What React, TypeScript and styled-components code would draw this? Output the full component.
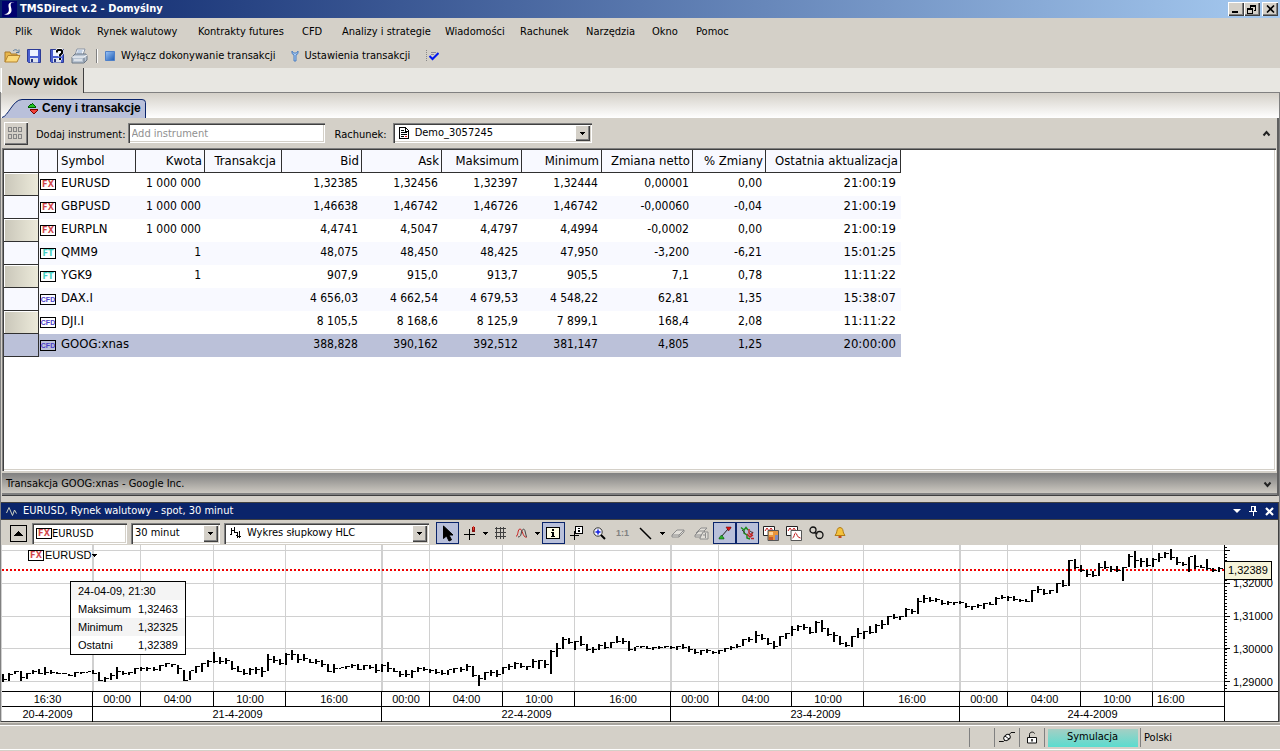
import React from "react";
import styled, { createGlobalStyle } from "styled-components";

const UI = '"DejaVu Sans Condensed", "DejaVu Sans", sans-serif';
const ARIAL = '"Liberation Sans", Arial, sans-serif';
const FACE = "#d4d0c8";
const NAVY = "#0a246a";
const PALE = "#b9c0da";

const GlobalStyle = createGlobalStyle`
  * { box-sizing: border-box; }
  body { margin: 0; background: ${FACE}; color: #000; font: 11px/14px ${UI}; }
  button, input, select { font: inherit; color: inherit; margin: 0; padding: 0; border: 0; background: none; border-radius: 0; }
  svg { display: block; flex: none; }
`;

/* ---------- window ---------- */

const Window = styled.div`
  display: flex;
  flex-direction: column;
  min-height: 100vh;
`;

const TitleBar = styled.header`
  display: flex;
  align-items: center;
  height: 18px;
  padding-right: 2px;
  background: linear-gradient(to right, ${NAVY}, #a6caf0);
`;

const WindowTitle = styled.h1`
  flex: 1;
  margin: 0 0 0 2px;
  color: #fff;
  font: bold 11px/18px ${UI};
`;

const CaptionButton = styled.button<{ $apart?: boolean }>`
  display: flex;
  align-items: center;
  justify-content: center;
  width: 16px;
  height: 14px;
  margin-left: ${(p) => (p.$apart ? 2 : 0)}px;
  background: ${FACE};
  box-shadow: inset 1px 1px #fff, inset -1px -1px #404040, inset -2px -2px #808080;
`;

const MenuBar = styled.nav`
  display: grid;
  grid-template-columns: 35px 47px 101px 104px 40px 103px 75px 66px 66px 44px auto;
  justify-content: start;
  align-items: center;
  height: 25px;
  padding: 2px 0 0 15px;
`;

const MenuItem = styled.button`
  text-align: left;
  white-space: nowrap;
`;

const ToolBar = styled.div`
  display: flex;
  align-items: center;
  height: 25px;
  padding-left: 3px;
`;

const IconButton = styled.button`
  display: flex;
  align-items: center;
  justify-content: center;
  width: 23px;
  height: 22px;
  &:first-child { width: 19px; }
`;

const Rule = styled.span`
  width: 2px;
  height: 14px;
  margin: 0 7px 0 5px;
  border-left: 1px solid #808080;
  border-right: 1px solid #fff;
`;

const LabelButton = styled.button`
  display: flex;
  align-items: center;
  gap: 6px;
  height: 22px;
  margin-right: 15px;
  white-space: nowrap;
`;

/* ---------- views ---------- */

const ViewTabs = styled.div`
  display: flex;
  height: 25px;
  padding-left: 1px;
  background: #e8e7e2;
  border-bottom: 1px solid #808080;
`;

const ViewTab = styled.button`
  height: 25px;
  padding: 0 6px;
  background: ${FACE};
  border-right: 1px solid #404040;
  border-left: 1px solid #fff;
  font: bold 12px/24px ${ARIAL};
`;

const Dock = styled.main`
  flex: 1;
  display: flex;
  flex-direction: column;
  border-right: 1px solid #808080;
  border-left: 1px solid #808080;
`;

const PanelTabs = styled.div`
  display: flex;
  align-items: flex-end;
  height: 25px;
  padding-left: 1px;
  background: linear-gradient(${FACE}, #fff);
`;

const PanelTab = styled.button`
  position: relative;
  isolation: isolate;
  display: flex;
  align-items: center;
  gap: 4px;
  width: 144px;
  height: 19px;
  padding-left: 26px;
  white-space: nowrap;
  font: bold 12px/19px ${ARIAL};
`;

const TabShape = styled.svg`
  position: absolute;
  inset: 0;
  z-index: -1;
`;

const PricesPanel = styled.section`
  flex: 1;
  display: flex;
  flex-direction: column;
  margin-left: 1px;
  border-right: 2px solid #606060;
`;

const FilterBar = styled.form`
  display: flex;
  align-items: center;
  height: 30px;
  padding: 0 3px 0 2px;
`;

const RaisedButton = styled.button`
  display: flex;
  align-items: center;
  justify-content: center;
  width: 24px;
  height: 23px;
  background: ${FACE};
  box-shadow: inset 1px 1px #fff, inset -1px -1px #404040, inset -2px -2px #808080;
`;

const FieldLabel = styled.label<{ $roomy?: boolean }>`
  margin: 3px ${(p) => (p.$roomy ? "6px 0 10px" : "2px 0 8px")};
  white-space: nowrap;
`;

const Sunken = styled.div<{ $w: number; $h: number; $icon?: boolean }>`
  display: flex;
  align-items: center;
  gap: ${(p) => (p.$icon ? 4 : 0)}px;
  width: ${(p) => p.$w}px;
  height: ${(p) => p.$h}px;
  padding: 2px 2px 2px ${(p) => (p.$icon ? 6 : 2)}px;
  background: #fff;
  box-shadow: inset 1px 1px #808080, inset 2px 2px #404040, inset -1px -1px #fff, inset -2px -2px ${FACE};
`;

const TextInput = styled.input<{ $flush?: boolean }>`
  flex: 1;
  min-width: 0;
  height: 100%;
  padding-left: ${(p) => (p.$flush ? 0 : 2)}px;
  outline: 0;
  &::placeholder { color: #909090; opacity: 1; }
`;

const Select = styled.select`
  flex: 1;
  min-width: 0;
  height: 100%;
  padding-left: 2px;
  appearance: none;
  outline: 0;
`;

const DropArrow = styled.span`
  display: flex;
  align-items: center;
  justify-content: center;
  width: 15px;
  height: 100%;
  background: ${FACE};
  box-shadow: inset 1px 1px #fff, inset -1px -1px #404040, inset -2px -2px #808080;
`;

const Spring = styled.span`
  flex: 1;
`;

const PlainIcon = styled.button`
  display: flex;
  align-items: center;
  justify-content: center;
  width: 16px;
  height: 14px;
`;

const TableFrame = styled.div`
  flex: 1;
  margin-right: 1px;
  padding: 2px 0 0 2px;
  background: #fff;
  box-shadow: inset 1px 1px #808080, inset 2px 2px #404040, inset -1px -1px #fff, inset -2px -2px ${FACE};
`;

const Grid = styled.table`
  width: 897px;
  table-layout: fixed;
  border-collapse: separate;
  border-spacing: 0;
`;

const HeadCell = styled.th<{ $left?: boolean }>`
  height: 23px;
  padding: 0 2px 0 3px;
  background: #f8f9ff;
  border-right: 1px solid #303030;
  border-bottom: 1px solid #303030;
  font-size: 13px;
  font-weight: normal;
  text-align: ${(p) => (p.$left ? "left" : "right")};
  white-space: nowrap;
`;

const DealHead = styled(HeadCell)`
  padding-right: 5px;
`;

const Row = styled.tr<{ $selected: boolean; $even: boolean }>`
  background: ${(p) => (p.$selected ? "#bbc1d9" : p.$even ? "#f8f9ff" : "#fff")};
`;

const RowHead = styled.th<{ $shaded: boolean }>`
  height: 23px;
  padding: 0;
  border-right: 1px solid #303030;
  border-bottom: 1px solid #303030;
  ${(p) => p.$shaded && "background: linear-gradient(to right, #c9c6b9, #eceada); box-shadow: inset 1px 1px #fff;"}
`;

const Cell = styled.td`
  height: 23px;
  padding: 0 4px 3px 0;
  font-size: 12px;
  text-align: right;
  white-space: nowrap;
`;

const UpdatedCell = styled(Cell)`
  padding-right: 5px;
  font-size: 13px;
`;

const TagCell = styled.td`
  padding: 0 0 0 1px;
`;

const SymbolCell = styled.td`
  padding: 0 0 3px 3px;
  font-size: 13px;
`;

const Tag = styled.span<{ $color: string; $small?: boolean }>`
  display: flex;
  flex: none;
  align-items: center;
  justify-content: center;
  width: 16px;
  height: 11px;
  border: 1px solid #000;
  background: ${(p) => (p.$small ? "transparent" : "#fff")};
  color: ${(p) => p.$color};
  font: bold ${(p) => (p.$small ? `7px/9px ${ARIAL}` : `9px/9px ${UI}`)};
`;

const DealBar = styled.div`
  display: flex;
  align-items: center;
  height: 24px;
  margin-top: 1px;
  padding: 0 2px 0 4px;
  background: linear-gradient(#808080, #cdc9c1 20px, #808080 20px);
  border-top: 1px solid #d4d0c8;
  border-bottom: 1px solid #404040;
`;

/* ---------- chart ---------- */

const ChartPanel = styled.section`
  margin-top: 6px;
  border-right: 1px solid #404040;
  border-bottom: 1px solid #404040;
`;

const ChartTitle = styled.header`
  display: flex;
  align-items: center;
  height: 17px;
  padding: 0 1px 0 5px;
  background: ${NAVY};
  border-top: 1px solid #404040;
  color: #fff;
`;

const ChartName = styled.h2`
  flex: 1;
  margin: 0 0 0 6px;
  font: 11px/16px ${UI};
`;

const ChartTools = styled.div`
  display: flex;
  align-items: center;
  height: 26px;
  padding: 1px 0 0 9px;
  border-top: 1px solid #404040;
`;

const ToolGroup = styled.div`
  display: flex;
  margin-left: 3px;
`;

const UpButton = styled.button`
  display: flex;
  align-items: center;
  justify-content: center;
  width: 17px;
  height: 17px;
  border: 1px solid #000;
  margin-right: 5px;
`;

const Field = styled(Sunken)`
  margin-right: 4px;
`;

const Spacer = styled.span`
  width: 2px;
`;

const Tool = styled.button<{ $on?: boolean; $tight?: boolean }>`
  display: flex;
  align-items: center;
  justify-content: center;
  width: ${(p) => (p.$tight ? 21 : 23)}px;
  height: 22px;
  background: ${(p) => (p.$on ? PALE : "transparent")};
  border: ${(p) => (p.$on ? `1px solid ${NAVY}` : "0")};
  color: #808080;
  font: bold 9px/12px ${ARIAL};
`;

const ToolArrow = styled.button`
  display: flex;
  align-items: center;
  justify-content: center;
  width: 10px;
  height: 22px;
`;

const ChartBody = styled.div`
  display: flex;
  background: #fff;
`;

const PlotColumn = styled.div`
  flex: 1;
  border-right: 1px solid #000;
  border-left: 1px solid #d0d0d0;
`;

const Plot = styled.div`
  position: relative;
  height: 146px;
`;

const Series = styled.svg`
  width: 100%;
  height: 146px;
`;

const Legend = styled.button`
  position: absolute;
  left: 26px;
  top: 3px;
  display: flex;
  align-items: center;
  gap: 1px;
  font: 11px/14px ${ARIAL};
`;

const InfoBox = styled.dl`
  position: absolute;
  left: 68px;
  top: 36px;
  width: 116px;
  height: 74px;
  margin: 0;
  border: 1px solid #000;
  background: #fff;
  font: 11px/18px ${ARIAL};
`;

const InfoRow = styled.div<{ $shaded?: boolean }>`
  display: grid;
  grid-template-columns: 60px auto;
  height: 18px;
  padding-left: 7px;
  background: ${(p) => (p.$shaded ? "#f4f4f4" : "#fff")};
  white-space: nowrap;
  & > dt:only-child { grid-column: span 2; }
`;

const InfoValue = styled.dd`
  margin: 0;
`;

const TimeRow = styled.div<{ $spans: number[] }>`
  display: grid;
  grid-template-columns: ${(p) => p.$spans.map((s) => `minmax(0, ${s}fr)`).join(" ")};
  height: 15px;
  border-top: 1px solid #000;
  font: 11px/15px ${ARIAL};
`;

const TimeCell = styled.div<{ $cut?: boolean }>`
  padding-left: ${(p) => (p.$cut ? 4 : 1)}px;
  text-align: ${(p) => (p.$cut ? "left" : "center")};
  &:not(:first-child) { border-left: 1px solid #000; }
`;

const PriceScale = styled.div`
  position: relative;
  width: 53px;
  padding-top: 22px;
`;

const PriceTicks = styled.svg`
  position: absolute;
  left: 0;
  top: 0;
`;

const PriceLabel = styled.div`
  height: 33px;
  padding-left: 8px;
  font: 11px/33px ${ARIAL};
`;

const ScaleFoot = styled.div`
  position: absolute;
  left: 0;
  right: 0;
  top: 146px;
  border-top: 1px solid #000;
`;

const PriceTag = styled.output`
  position: absolute;
  left: -1px;
  top: 16px;
  width: 48px;
  height: 19px;
  border: 1px solid #000;
  background: #f6f4da;
  padding-left: 3px;
  font: 11px/17px ${ARIAL};
`;

/* ---------- status bar ---------- */

const StatusBar = styled.footer`
  display: flex;
  justify-content: flex-end;
  align-items: center;
  height: 25px;
  margin-top: 3px;
  margin-bottom: 1px;
  border-top: 1px solid #fff;
  border-bottom: 1px solid #fff;
  box-shadow: 0 -2px #a8a59f;
`;

const StatusCell = styled.div<{ $w: number }>`
  display: flex;
  align-items: center;
  justify-content: center;
  width: ${(p) => p.$w}px;
  height: 19px;
  border-left: 1px solid #808080;
`;

const ModeBadge = styled.span`
  width: 90px;
  height: 18px;
  background: linear-gradient(#a4cfc4, #5bdccf);
  line-height: 16px;
  text-align: center;
`;

const LanguageCell = styled(StatusCell)`
  justify-content: flex-start;
  padding-left: 3px;
`;

/* ---------- icons ---------- */

const Down = () => (
  <svg width="5" height="3" shapeRendering="crispEdges"><path d="M0 0h5v1H0zM1 1h3v1H1zM2 2h1v1H2z" /></svg>
);
const Chevron = ({ up }: { up?: boolean }) => (
  <svg width="9" height="7"><path d={up ? "M1.5 5.5 4.5 2l3 3.5" : "M1.5 1.5 4.5 5l3-3.5"} fill="none" stroke="#222" strokeWidth="2" /></svg>
);
const Logo = () => (
  <svg width="18" height="18">
    <path d="M2 1h15v16H2z" fill="#00006e" />
    <path d="M14.500 2.500c-4.500-1-6.500 1-6 4 .6 3 .8 5-1 6.500-1 1-2.600 1.200-4 .7 3 2.200 7.500 1 8-2.700.3-2.600-1.300-5-.8-7 .5-1.300 2-1.700 3.800-1.500z" fill="#fff" />
  </svg>
);
const OpenIcon = () => (
  <svg width="17" height="16">
    <path d="M1 14V4h5l1 2h6v3" fill="#e8b64a" stroke="#a8782a" />
    <path d="M1 14 4 7.500h12L13 14z" fill="#fbd878" stroke="#b58430" />
    <path d="M9 3c2-2 4-1.500 5 .5m1-2v3h-3" fill="none" stroke="#56789c" />
  </svg>
);
const SaveIcon = ({ ask }: { ask?: boolean }) => (
  <svg width="16" height="16">
    <path d="M1.500 1.500h13v13h-12l-1-1z" fill="#4a5fd0" stroke="#2b3a96" />
    <path d="M4 2h8v6H4z" fill="#eef3ff" />
    <path d="M4 10h8v4.500H4z" fill="#dfe4ee" />
    <path d="M5 11h2v3H5z" fill="#26337f" />
    {ask && <path d="M8 4.500V3l1-1h3l1 1v2l-2 2v1.500M11 10v2" fill="none" stroke="#fff" strokeWidth="3.500" />}
    {ask && <path d="M8 4.500V3l1-1h3l1 1v2l-2 2v1.500M11 10v2" fill="none" stroke="#000" strokeWidth="2" />}
  </svg>
);
const PrintIcon = () => (
  <svg width="17" height="16">
    <path d="M6 1h8l-2 6H4z" fill="#fafcff" stroke="#8a94a4" />
    <path d="M6.500 3h5M6 5h5" stroke="#86a3c8" />
    <path d="M1 9l3-3h11l1 2v4l-3 3H1z" fill="#b8c4d2" stroke="#6d7886" />
    <path d="M1 9h12l3-2M3 12h8" fill="none" stroke="#fff" />
    <path d="M13 10v4" stroke="#6d7886" />
  </svg>
);
const StopIcon = () => (
  <svg width="10" height="10">
    <defs><linearGradient id="stop" x2="1" y2="1"><stop stopColor="#9cc5f8" /><stop offset="1" stopColor="#1c5bb4" /></linearGradient></defs>
    <path d="M.5.5h9v9h-9z" fill="url(#stop)" stroke="#4f80c8" />
  </svg>
);
const WrenchIcon = () => (
  <svg width="8" height="12">
    <path d="M1 1v2.500L3 5v6h2V5l2-1.500V1L5.500 3h-3z" fill="#a9cdf6" stroke="#4c7fc0" />
  </svg>
);
const CheckIcon = () => (
  <svg width="14" height="13">
    <path d="M1.500 1v11" stroke="#888" strokeDasharray="1 1" />
    <path d="M6 3.500h5M6 5.500h3" stroke="#88889c" />
    <path d="M4.500 7 7.500 10l6-6" fill="none" stroke="#0018f0" strokeWidth="2" />
  </svg>
);
const UpDownIcon = () => (
  <svg width="10" height="12" shapeRendering="crispEdges">
    <path d="M4 0h1v1h1v1h1v1h1v2H0V3h1V2h1V1h2z" fill="#005800" />
    <path d="M4 1h1v1h1v1h1v1H1V3h1V2h2z" fill="#22c422" />
    <path d="M2 6h8v2H9v1H8v1H7v1H5v-1H4V9H3V8H2z" fill="#7a0000" />
    <path d="M3 7h6v1H8v1H7v1H5V9H4V8H3z" fill="#f04038" />
  </svg>
);
const GridDotsIcon = () => (
  <svg width="16" height="12" shapeRendering="crispEdges" fill="none" stroke="#858585">
    {[0, 5, 10].map((x) => <path key={x} d={`M${x}.5 .5h3v4h-3zM${x}.5 7.500h3v4h-3z`} />)}
  </svg>
);
const DocIcon = () => (
  <svg width="10" height="12" shapeRendering="crispEdges">
    <path d="M.5.500h6l3 3v8h-9z" fill="#fff" stroke="#000" />
    <path d="M2 3.500h3M2 5.500h6M2 7.500h6M2 9.500h3" stroke="#000" />
    <path d="M6 9.500h2" stroke="#e00" />
    <path d="M6.500 1v3h3" fill="none" stroke="#000" />
  </svg>
);
const PulseIcon = () => (
  <svg width="11" height="11"><path d="M.5 7 3 1.500 6.500 9.500 8.500 4l2 3.500" fill="none" stroke="#cfd3c4" /></svg>
);
const HlcIcon = () => (
  <svg width="11" height="12" shapeRendering="crispEdges"><path d="M1.500 1v7M0 7.500h2M1.500 3.500h3M4.500 0v6M4.500 5.500h2M7.500 5v6M6 8.500h2M9.500 4v7M8 9.500h3" stroke="#000" fill="none" /></svg>
);
const CursorIcon = () => (
  <svg width="12" height="17"><path d="M1.500 1v12.500L4.500 11l2.500 5 2.500-1.200L7 10h4z" stroke="#000" /></svg>
);
const CrossIcon = () => (
  <svg width="14" height="16" shapeRendering="crispEdges">
    <path d="M6.500 4v11M1 9.500h11" stroke="#000" />
    <path d="M9 2h3v5H9z" fill="#8a1010" /><path d="M10 1h1v4h-1z" fill="#f04030" />
  </svg>
);
const HashIcon = () => (
  <svg width="13" height="12" shapeRendering="crispEdges"><path d="M2.500 0v12M6.500 0v12M9.500 0v12M1 1.500h11M1 5.500h11M1 9.500h11" stroke="#404040" /></svg>
);
const WaveIcon = () => (
  <svg width="13" height="12" fill="none">
    <path d="M1 9.500C3.500 8.500 2.500 2 5 2S7.500 10 11.500 10.500" stroke="#c81e1e" />
    <path d="M3 10c2.500 0 3-2 3.500-5S9.500 1 10 4l1.500 6" stroke="#444" />
  </svg>
);
const InfoIcon = () => (
  <svg width="15" height="13" shapeRendering="crispEdges">
    <path d="M.5.500h13v11H.500z" fill="#fffde6" stroke="#000" />
    <path d="M6 2h2v2H6zM5 5h3v4h1v1H5V9h1V6H5z" />
  </svg>
);
const InfoCrossIcon = () => (
  <svg width="14" height="14" shapeRendering="crispEdges">
    <path d="M5.500.5h7v7h-7z" fill="#fff" stroke="#000" />
    <path d="M8 2h2v1H8zM8 4h2v2H8zM0 9h9v1H0zM4 5h1v9H4z" />
  </svg>
);
const ZoomIcon = () => (
  <svg width="13" height="13">
    <circle cx="5" cy="5" r="4.200" fill="#f4f6ff" stroke="#333" />
    <path d="M5 2.500v5M2.500 5h5" stroke="#1420e0" strokeWidth="1.500" />
    <path d="m8 8 4 4" stroke="#000" strokeWidth="2" />
  </svg>
);
const LineIcon = () => (
  <svg width="13" height="13"><path d="m1 1 11 11" stroke="#000" strokeWidth="1.500" /></svg>
);
const EraserIcon = ({ many }: { many?: boolean }) => (
  <svg width="15" height="13" fill="#e2dfd9" stroke="#8c8c8c">
    {many && <path d="M2 6l5-5h6l-5 5z" />}
    <path d={many ? "M1 8l4-4h6L7 8zM1 8v2h6V8" : "M1 8l5-5h7L8 8zM1 8v2h7V8M8 10l5-5V3"} />
    {many && <path d="M6 11l3-6 5 0v7H6zM9 8h3M11.500 6v5" />}
  </svg>
);
const TrendIcon = () => (
  <svg width="14" height="14">
    <path d="m3 11 7-8" stroke="#222" />
    <path d="M8 1h5v1l-2.500 3z" fill="#e01010" stroke="#500" strokeWidth=".5" />
    <path d="M1 13h5v-1L3.500 9 1 12z" fill="#28b028" stroke="#040" strokeWidth=".5" />
  </svg>
);
const SignalsIcon = () => (
  <svg width="15" height="14" fill="none" strokeWidth="1.500">
    <path d="M1 1.500 4 4l2-2.500L8 4M4 4v3l3 2v3l3 1" stroke="#1d8a1d" />
    <path d="M9 3v4l2 2 2-3M7 8l3 3 3-2M11 12.500h3" stroke="#c02828" />
    <path d="M2 4l3 3M10 5l3 2" stroke="#3a3a3a" strokeWidth="1" />
  </svg>
);
const LayersIcon = ({ orange }: { orange?: boolean }) => (
  <svg width="16" height="15">
    <path d="M.5.500h11v9H.500z" fill="#fff" stroke="#222" />
    <path d="M2 5l2-3 2 3 2-3 2 3" fill="none" stroke="#c01818" />
    <path d="M5 4.500h10.500v10H5z" fill={orange ? "#e8963c" : "#fff"} stroke="#555" />
    {orange ? (
      <>
        <path d="M6 6h4v3H6z" fill="#fbd49a" />
        <path d="M12 9h3v5h-3z" fill="#7c8ac0" />
        <path d="M6 11h4v3H6z" fill="#c85a2c" />
      </>
    ) : (
      <path d="M6.500 12c2 0 1.500-5 3-5s1.500 5 5 5" fill="none" stroke="#c01818" />
    )}
  </svg>
);
const ChainIcon = () => (
  <svg width="15" height="14" fill="none" stroke="#111" strokeWidth="1.300">
    <circle cx="4" cy="4" r="3" /><circle cx="10.500" cy="9" r="3.500" /><path d="M5 6.500l3.500 1.500" />
  </svg>
);
const BellIcon = () => (
  <svg width="12" height="12">
    <path d="M6 .5c3 0 3 3.500 3.500 5.500L11 8.500H1L2.500 6C3 4 3 .5 6 .5z" fill="#f4c23c" stroke="#b07c18" />
    <path d="M4.500 9h3v2h-3z" fill="#c44a1c" />
  </svg>
);
const PlugIcon = () => (
  <svg width="16" height="11" fill="none" stroke="#111">
    <path d="M0 9.500h4.500L6 8M10 3l2-2.500h4" /><ellipse cx="8" cy="5.500" rx="3.500" ry="2.600" transform="rotate(-40 8 5.500)" fill="#fff" /><path d="M6 4l4 3" />
  </svg>
);
const LockIcon = () => (
  <svg width="12" height="13" fill="none" stroke="#111">
    <path d="M1.500 6.500h9v5.500h-9z" fill="#fff" /><path d="M3.500 6V3.500C3.500.5 8 .5 8.500 2.500" /><path d="M6 8v2.500" strokeWidth="1.500" />
  </svg>
);
const PinIcon = () => (
  <svg width="8" height="10" shapeRendering="crispEdges"><path d="M2.500 0v5M2 .5h4M5 0v5M6.500 0v5M0 5.500h8M4 6v4" stroke="#fff" fill="none" /></svg>
);

/* ---------- data ---------- */

const MENU = ["Plik", "Widok", "Rynek walutowy", "Kontrakty futures", "CFD", "Analizy i strategie", "Wiadomości", "Rachunek", "Narzędzia", "Okno", "Pomoc"];

const COLUMNS = [35, 19, 78, 69, 77, 80, 80, 80, 80, 91, 73, 135];

type Kind = "FX" | "FT" | "CFD";
const KIND_COLOR: Record<Kind, string> = { FX: "#d2494c", FT: "#45cfc0", CFD: "#4a40c8" };

const ROWS: [Kind, string, string, string, string, string, string, string, string, string][] = [
  ["FX", "EURUSD", "21:00:19", "1 000 000", "1,32385", "1,32456", "1,32397", "1,32444", "0,00001", "0,00"],
  ["FX", "GBPUSD", "21:00:19", "1 000 000", "1,46638", "1,46742", "1,46726", "1,46742", "-0,00060", "-0,04"],
  ["FX", "EURPLN", "21:00:19", "1 000 000", "4,4741", "4,5047", "4,4797", "4,4994", "-0,0002", "0,00"],
  ["FT", "QMM9", "15:01:25", "1", "48,075", "48,450", "48,425", "47,950", "-3,200", "-6,21"],
  ["FT", "YGK9", "11:11:22", "1", "907,9", "915,0", "913,7", "905,5", "7,1", "0,78"],
  ["CFD", "DAX.I", "15:38:07", "", "4 656,03", "4 662,54", "4 679,53", "4 548,22", "62,81", "1,35"],
  ["CFD", "DJI.I", "11:11:22", "", "8 105,5", "8 168,6", "8 125,9", "7 899,1", "168,4", "2,08"],
  ["CFD", "GOOG:xnas", "20:00:00", "", "388,828", "390,162", "392,512", "381,147", "4,805", "1,25"],
];

/* Half-hour bars as high, low, close; heights are thirds of a unit below each run's base. */
const RUNS: { base: number; bars: string }[] = [
  {
    base: -15,
    bars: "402,425,421 399,423,405 393,403,395 393,423,413 399,417,401 390,402,395 387,402,402 381,405,398 390,402,399 396,402,401 399,403,403 402,409,409 396,411,399 395,401,398 396,400,397 390,402,401 396,423,423 411,426,417 399,419,409 381,417,396 393,405,402 396,404,400 384,402,388 381,394,387 381,393,386 382,392,391 375,393,377 369,382,373 372,380,376 375,402,388 390,424,422 393,420,394 378,400,381 369,396,372 360,381,367 336,369,367 351,371,367 354,372,363 363,390,387 378,396,395 387,405,402 384,405,391 382,402,391 381,411,397 342,393,359 347,369,364 357,375,372 339,375,346 331,360,345 342,369,360 342,362,358 357,370,368 357,371,367",
  },
  {
    base: 165,
    bars: "180,200,196 193,217,216 193,219,207 203,206,205 198,206,201 191,204,199 191,210,209 195,210,198 195,208,204 192,219,212 192,215,199 186,216,208 204,217,216 213,230,226 210,230,225 210,234,217 201,216,207 201,213,210 206,219,213 207,222,220 210,225,222 210,224,211 204,219,208 201,215,211 192,213,201 198,231,229 225,258,236 216,240,219 210,228,219 210,231,224 201,222,205 192,210,200 186,207,193 189,204,202 198,209,200 177,204,186 180,207,182 180,205,194 150,222,157 129,171,148 111,147,119 114,133,129 123,150,127 108,138,135 132,153,150 141,158,150 132,151,137 126,147,144 126,144,130 108,129,127 114,131,126 123,153,151 141,153,142",
  },
  {
    base: -15,
    bars: "318,324,322 318,328,327 321,329,323 318,326,324 318,324,322 318,327,325 317,329,320 312,327,325 318,335,331 328,342,340 330,345,333 327,339,334 332,341,340 330,341,333 324,336,328 318,330,324 312,325,320 297,318,299 291,306,301 273,309,289 283,300,298 294,315,312 303,327,320 288,319,290 279,297,283 258,288,271 254,273,261 252,270,265 261,282,280 243,280,249 240,276,268 264,288,286 276,306,289 288,315,313 306,320,317 288,320,291 264,294,281 273,297,275 258,282,280 252,280,259 240,267,256 228,255,232 222,237,235 228,239,231 204,231,211 207,222,217 174,222,187 165,189,177 171,186,184 174,186,181 180,195,193 183,195,190 186,195,190 183,193,190",
  },
  {
    base: -240,
    bars: "414,429,427 424,436,427 417,428,424 415,432,418 411,420,419 396,420,401 390,403,400 394,409,398 393,408,406 402,412,409 402,412,411 375,411,377 363,385,376 373,390,387 375,388,379 354,384,358 346,366,363 285,363,288 282,313,310 300,321,317 315,335,330 318,336,334 294,333,308 288,313,310 303,320,316 303,320,318 306,348,310 267,306,277 258,308,289 279,306,292 279,306,304 279,306,285 265,292,279 262,280,267 252,284,280 276,300,294 291,303,300 276,321,276 270,312,307 300,309,308 282,315,312 310,321,319 306,320,313",
  },
];

const BARS = RUNS.flatMap(({ base, bars }) =>
  bars.split(" ").map((bar) => bar.split(",").map((v) => Math.round((Number(v) + base) / 3)))
);

const barPath = BARS.map(([high, low, close], i) => {
  const x = Math.round(i * 6.02);
  return `M${x} ${high}h2v${low - high}h-2zM${x + 2} ${close - 1}h3v1h-3z`;
}).join("");

const PRICE_LINES = [5, 38, 71, 103, 136];
const HOUR_LINES = [138, 211, 283, 427, 500, 572, 716, 789, 861, 1005, 1078, 1150];
const DAY_LINES = [90, 379, 668, 957];

const HOURS: [string, number][] = [
  ["16:30", 90], ["00:00", 48], ["04:00", 73], ["10:00", 72], ["16:00", 96],
  ["00:00", 48], ["04:00", 73], ["10:00", 72], ["16:00", 96],
  ["00:00", 48], ["04:00", 73], ["10:00", 72], ["16:00", 96],
  ["00:00", 48], ["04:00", 73], ["10:00", 72], ["16:00", 72],
];
const DAYS: [string, number][] = [["20-4-2009", 90], ["21-4-2009", 289], ["22-4-2009", 289], ["23-4-2009", 289], ["24-4-2009", 265]];
const PRICES = ["1,32000", "1,31000", "1,30000", "1,29000"];

const tickPath = Array.from({ length: 44 }, (_, i) => {
  const y = 2 + Math.round(i * 3.28);
  return `M0 ${y}.5h2`;
}).join("") + PRICE_LINES.map((y) => `M0 ${y}.5h5`).join("");

/* ---------- parts ---------- */

const KindTag = ({ kind }: { kind: Kind }) => (
  <Tag $color={KIND_COLOR[kind]} $small={kind === "CFD"}>{kind}</Tag>
);

const PriceTable = () => (
  <Grid>
    <colgroup>{COLUMNS.map((w, i) => <col key={i} width={w} />)}</colgroup>
    <thead>
      <tr>
        <HeadCell aria-label="Wiersz" /><HeadCell aria-label="Typ" />
        <HeadCell $left>Symbol</HeadCell><HeadCell>Kwota</HeadCell><DealHead>Transakcja</DealHead>
        {["Bid", "Ask", "Maksimum", "Minimum", "Zmiana netto", "% Zmiany", "Ostatnia aktualizacja"].map((h) => <HeadCell key={h}>{h}</HeadCell>)}
      </tr>
    </thead>
    <tbody>
      {ROWS.map(([kind, symbol, time, amount, ...quotes], i) => (
        <Row key={symbol} $selected={i === 7} $even={i % 2 === 1}>
          <RowHead $shaded={i % 2 === 0} />
          <TagCell><KindTag kind={kind} /></TagCell>
          <SymbolCell>{symbol}</SymbolCell>
          <Cell>{amount}</Cell>
          <Cell />
          {quotes.map((v, j) => <Cell key={j}>{v}</Cell>)}
          <UpdatedCell>{time}</UpdatedCell>
        </Row>
      ))}
    </tbody>
  </Grid>
);

const ChartToolBar = () => (
  <ChartTools>
    <UpButton aria-label="Zwiń">
      <svg width="9" height="5" shapeRendering="crispEdges"><path d="M4 0h1v1h1v1h1v1h1v1h1v1H0V4h1V3h1V2h1V1h1z" /></svg>
    </UpButton>
    <Field $w={95} $h={21}>
      <Spacer />
      <KindTag kind="FX" />
      <TextInput $flush aria-label="Instrument" defaultValue="EURUSD" />
    </Field>
    <Field $w={89} $h={21}>
      <Select aria-label="Okres"><option>30 minut</option></Select>
      <DropArrow><Down /></DropArrow>
    </Field>
    <Field $w={205} $h={21} $icon>
      <HlcIcon />
      <Select aria-label="Typ wykresu"><option>Wykres słupkowy HLC</option></Select>
      <DropArrow><Down /></DropArrow>
    </Field>
    <ToolGroup>
      <Tool $on aria-label="Wskaźnik"><CursorIcon /></Tool>
      <Tool $tight aria-label="Krzyż"><CrossIcon /></Tool>
      <ToolArrow aria-label="Krzyż – opcje"><Down /></ToolArrow>
      <Tool $tight aria-label="Siatka"><HashIcon /></Tool>
      <Tool $tight aria-label="Wskaźniki"><WaveIcon /></Tool>
      <ToolArrow aria-label="Wskaźniki – opcje"><Down /></ToolArrow>
      <Tool $on aria-label="Informacje"><InfoIcon /></Tool>
      <Tool aria-label="Informacje pod kursorem"><InfoCrossIcon /></Tool>
      <Tool aria-label="Powiększ"><ZoomIcon /></Tool>
      <Tool>1:1</Tool>
      <Tool aria-label="Linia"><LineIcon /></Tool>
      <ToolArrow aria-label="Linia – opcje"><Down /></ToolArrow>
      <Tool aria-label="Usuń"><EraserIcon /></Tool>
      <Tool aria-label="Usuń wszystko"><EraserIcon many /></Tool>
      <Tool $on aria-label="Transakcje"><TrendIcon /></Tool>
      <Tool $on aria-label="Zlecenia"><SignalsIcon /></Tool>
      <Tool aria-label="Zapisz szablon"><LayersIcon orange /></Tool>
      <Tool aria-label="Wczytaj szablon"><LayersIcon /></Tool>
      <Tool aria-label="Połącz"><ChainIcon /></Tool>
      <Tool aria-label="Alarm"><BellIcon /></Tool>
    </ToolGroup>
  </ChartTools>
);

const Chart = () => (
  <ChartBody>
    <PlotColumn>
      <Plot>
        <Series viewBox="0 0 1222 146" preserveAspectRatio="none" shapeRendering="crispEdges" role="img" aria-label="EURUSD">
          {PRICE_LINES.map((y) => <path key={y} d={`M0 ${y}h1222v1H0z`} fill="#d0d0d0" />)}
          {HOUR_LINES.map((x) => <path key={x} d={`M${x} 0h1v146h-1z`} fill="#d0d0d0" />)}
          {DAY_LINES.map((x) => <path key={x} d={`M${x} 0h2v146h-2z`} fill="#d0d0d0" />)}
          <path d="M0 25h1222" stroke="#f00000" strokeWidth="2" strokeDasharray="2 2" />
          <path d={barPath} />
        </Series>
        <Legend><KindTag kind="FX" />EURUSD<Down /></Legend>
        <InfoBox>
          <InfoRow $shaded><dt>24-04-09, 21:30</dt></InfoRow>
          <InfoRow><dt>Maksimum</dt><InfoValue>1,32463</InfoValue></InfoRow>
          <InfoRow $shaded><dt>Minimum</dt><InfoValue>1,32325</InfoValue></InfoRow>
          <InfoRow><dt>Ostatni</dt><InfoValue>1,32389</InfoValue></InfoRow>
        </InfoBox>
      </Plot>
      <TimeRow $spans={HOURS.map(([, w]) => w)}>
        {HOURS.map(([t], i) => <TimeCell key={i} $cut={i === HOURS.length - 1}>{t}</TimeCell>)}
      </TimeRow>
      <TimeRow $spans={DAYS.map(([, w]) => w)}>
        {DAYS.map(([t]) => <TimeCell key={t}>{t}</TimeCell>)}
      </TimeRow>
    </PlotColumn>
    <PriceScale>
      <PriceTicks width="6" height="146" shapeRendering="crispEdges"><path d={tickPath} stroke="#000" /></PriceTicks>
      {PRICES.map((p) => <PriceLabel key={p}>{p}</PriceLabel>)}
      <ScaleFoot />
      <PriceTag>1,32389</PriceTag>
    </PriceScale>
  </ChartBody>
);

export default function App() {
  return (
    <Window>
      <GlobalStyle />
      <TitleBar>
        <Logo />
        <WindowTitle>TMSDirect v.2 - Domyślny</WindowTitle>
        <CaptionButton aria-label="Minimalizuj"><svg width="10" height="8"><path d="M1 6h6v2H1z" /></svg></CaptionButton>
        <CaptionButton aria-label="Przywróć">
          <svg width="10" height="9" shapeRendering="crispEdges" fill="none" stroke="#000"><path d="M3.500 3V.5h5v5H7M3 1.500h6M.5 4.500h5v4h-5zM0 3.500h6" /></svg>
        </CaptionButton>
        <CaptionButton $apart aria-label="Zamknij">
          <svg width="9" height="8"><path d="m1 .5 7 7m0-7-7 7" stroke="#000" strokeWidth="1.600" /></svg>
        </CaptionButton>
      </TitleBar>
      <MenuBar>{MENU.map((m) => <MenuItem key={m}>{m}</MenuItem>)}</MenuBar>
      <ToolBar>
        <IconButton aria-label="Otwórz"><OpenIcon /></IconButton>
        <IconButton aria-label="Zapisz"><SaveIcon /></IconButton>
        <IconButton aria-label="Zapisz jako"><SaveIcon ask /></IconButton>
        <IconButton aria-label="Drukuj"><PrintIcon /></IconButton>
        <Rule />
        <LabelButton><StopIcon />Wyłącz dokonywanie transakcji</LabelButton>
        <LabelButton><WrenchIcon />Ustawienia transakcji</LabelButton>
        <CheckIcon />
      </ToolBar>
      <ViewTabs><ViewTab>Nowy widok</ViewTab></ViewTabs>
      <Dock>
        <PanelTabs>
          <PanelTab>
            <TabShape width="144" height="19">
              <path d="M0 18.500C6 17.500 11 .5 20 .5h120q3.500 0 3.500 3V19H0z" fill={PALE} />
              <path d="M0 18.500C6 17.500 11 .5 20 .5h120q3.500 0 3.500 3V19" fill="none" stroke={NAVY} />
            </TabShape>
            <UpDownIcon />Ceny i transakcje
          </PanelTab>
        </PanelTabs>
        <PricesPanel>
          <FilterBar>
            <RaisedButton type="button" aria-label="Instrumenty"><GridDotsIcon /></RaisedButton>
            <FieldLabel htmlFor="instrument">Dodaj instrument:</FieldLabel>
            <Sunken $w={197} $h={20}><TextInput id="instrument" placeholder="Add instrument" /></Sunken>
            <FieldLabel $roomy htmlFor="account">Rachunek:</FieldLabel>
            <Sunken $w={199} $h={20} $icon>
              <DocIcon />
              <Select id="account"><option>Demo_3057245</option></Select>
              <DropArrow><Down /></DropArrow>
            </Sunken>
            <Spring />
            <PlainIcon type="button" aria-label="Zwiń"><Chevron up /></PlainIcon>
          </FilterBar>
          <TableFrame><PriceTable /></TableFrame>
          <DealBar>
            Transakcja GOOG:xnas - Google Inc.
            <Spring />
            <PlainIcon aria-label="Rozwiń"><Chevron /></PlainIcon>
          </DealBar>
        </PricesPanel>
        <ChartPanel>
          <ChartTitle>
            <PulseIcon />
            <ChartName>EURUSD, Rynek walutowy - spot, 30 minut</ChartName>
            <PlainIcon aria-label="Menu okna"><svg width="8" height="4"><path d="M0 0h8L4 4z" fill="#fff" /></svg></PlainIcon>
            <PlainIcon aria-label="Przypnij"><PinIcon /></PlainIcon>
            <PlainIcon aria-label="Zamknij wykres"><svg width="9" height="9"><path d="m1 1 7 7m0-7-7 7" stroke="#fff" strokeWidth="2.200" /></svg></PlainIcon>
          </ChartTitle>
          <ChartToolBar />
          <Chart />
        </ChartPanel>
      </Dock>
      <StatusBar>
        <StatusCell $w={25} />
        <StatusCell $w={25}><PlugIcon /></StatusCell>
        <StatusCell $w={25}><LockIcon /></StatusCell>
        <StatusCell $w={96}><ModeBadge>Symulacja</ModeBadge></StatusCell>
        <LanguageCell $w={140}>Polski</LanguageCell>
      </StatusBar>
    </Window>
  );
}
